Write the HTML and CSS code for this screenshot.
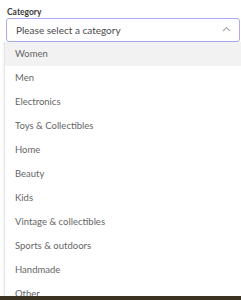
FILE: index.html
```html
<!DOCTYPE html>
<html>
<head>
  <title>Category</title>
  <link rel="stylesheet" href="styles.css">
</head>
<body>
  <div class="field">
    <label class="field-label">Category</label>
    <div class="select">
      <span class="select-text">Please select a category</span>
      <svg class="chevron" width="9" height="6" viewBox="0 0 9 6">
        <path d="M1 5 L4.5 1.5 L8 5" fill="none" stroke="#aaa" stroke-width="1.1"/>
      </svg>
    </div>
  </div>

  <!-- Options menu -->
  <ul class="menu">
    <li class="active">Women</li>
    <li>Men</li>
    <li>Electronics</li>
    <li>Toys &amp; Collectibles</li>
    <li>Home</li>
    <li>Beauty</li>
    <li>Kids</li>
    <li>Vintage &amp; collectibles</li>
    <li>Sports &amp; outdoors</li>
    <li>Handmade</li>
    <li>Other</li>
  </ul>

  <div class="bottom-bar"></div>
</body>
</html>
```

FILE: styles.css
```css
html, body {
  margin: 0;
  height: 300px;
  overflow: hidden;
}

body {
  font-family: Lato, "Open Sans", sans-serif;
  background-color: #fff;
  color: #666;
  position: relative;
}

.field {
  padding: 6px 1px 0 6px;
}

.field-label {
  display: block;
  font-size: 8.5px;
  font-weight: bold;
  color: #3a3a3a;
  padding-left: 1px;
  height: 12px;
  line-height: 12px;
}

.select {
  height: 22px;
  border: 1px solid #a9acf4;
  border-radius: 3px;
  display: flex;
  align-items: center;
  justify-content: space-between;
  padding: 0 8px 0 9px;
}

.select-text {
  font-size: 10px;
  color: #4a4a4a;
}

.chevron {
  margin-top: -2px;
}

.menu {
  list-style-type: none;
  margin: 0 0 0 4px;
  padding: 0;
  border-left: 1px solid #e6e6e6;
  box-shadow: -1px 0 2px rgba(0, 0, 0, 0.05);
}

.menu li {
  height: 24px;
  line-height: 24px;
  padding-left: 10px;
  font-size: 9.5px;
  color: #666;
}

.menu li.active {
  background-color: #f2f2f2;
}

.bottom-bar {
  position: absolute;
  left: 0;
  right: 0;
  bottom: 0;
  height: 4px;
  background-color: #3b3222;
}
```
